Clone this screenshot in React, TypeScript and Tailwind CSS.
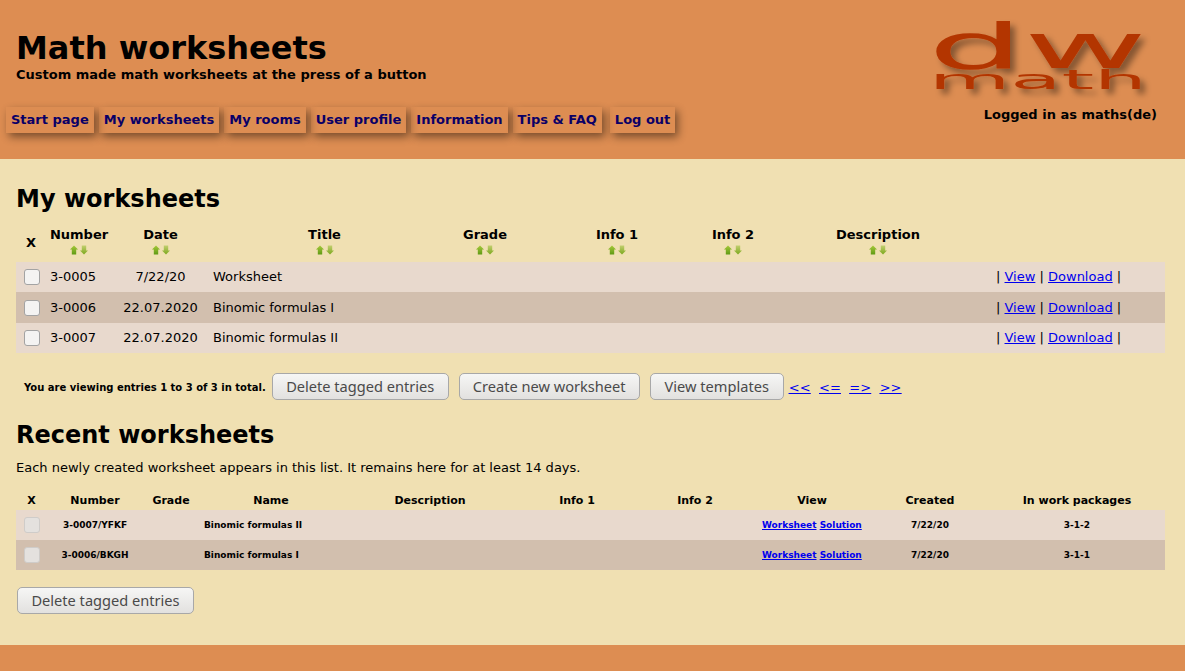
import React from "react";

const navItems = ["Start page", "My worksheets", "My rooms", "User profile", "Information", "Tips & FAQ", "Log out"];

const SortArrows = () => (
  <svg width="18" height="10" viewBox="0 0 18 10" className="mx-auto block">
    <defs>
      <linearGradient id="arrowUp" x1="0" y1="0" x2="0" y2="1">
        <stop offset="0" stopColor="#a6c93a" />
        <stop offset="1" stopColor="#5f9a14" />
      </linearGradient>
      <linearGradient id="arrowDown" x1="0" y1="0" x2="0" y2="1">
        <stop offset="0" stopColor="#c3cf70" />
        <stop offset="1" stopColor="#7aa81c" />
      </linearGradient>
    </defs>
    <path d="M4 0.5 L8 4.5 H6.2 V9.5 H1.8 V4.5 H0 Z" fill="url(#arrowUp)" />
    <path d="M11.8 0.5 H16.2 V5.5 H18 L14 9.5 L10 5.5 H11.8 Z" fill="url(#arrowDown)" />
  </svg>
);

const Logo = () => (
  <svg width="240" height="100" viewBox="0 0 240 100" className="block">
    <defs>
      <filter id="logoShadow" x="-10%" y="-10%" width="125%" height="130%">
        <feDropShadow dx="5" dy="5" stdDeviation="3" floodColor="#000" floodOpacity="0.4" />
      </filter>
    </defs>
    <g filter="url(#logoShadow)" fill="#b33600" fontFamily="'DejaVu Sans', sans-serif">
      <text x="11" y="68" fontSize="62" textLength="219" lengthAdjust="spacingAndGlyphs">dw</text>
      <text x="12" y="89" fontSize="27" textLength="218" lengthAdjust="spacingAndGlyphs">math</text>
    </g>
  </svg>
);

const Checkbox = ({ disabled }: { disabled?: boolean }) => (
  <span
    className={`block w-4 h-4 mx-auto rounded-[3px] border ${
      disabled ? "bg-[#e4e1de] border-[#cfccc9]" : "bg-[#f4f3f2] border-[#a3a3a3]"
    }`}
  />
);

const Button = ({ children, width }: { children: React.ReactNode; width: string }) => (
  <button
    className={`${width} h-[27px] rounded-[5px] border border-[#a8a8a8] bg-gradient-to-b from-[#f6f6f5] to-[#e2e1df] font-['Noto_Sans',sans-serif] text-[14.6px] text-[#4a4a4a] whitespace-nowrap`}
  >
    {children}
  </button>
);

const worksheets = [
  { no: "3-0005", date: "7/22/20", title: "Worksheet" },
  { no: "3-0006", date: "22.07.2020", title: "Binomic formulas I" },
  { no: "3-0007", date: "22.07.2020", title: "Binomic formulas II" },
];

const recent = [
  { no: "3-0007/YFKF", name: "Binomic formulas II", created: "7/22/20", pkg: "3-1-2" },
  { no: "3-0006/BKGH", name: "Binomic formulas I", created: "7/22/20", pkg: "3-1-1" },
];

const headCols = ["Number", "Date", "Title", "Grade", "Info 1", "Info 2", "Description"];

export default function App() {
  return (
    <div className="min-h-[671px] flex flex-col bg-[#f0e0b2] text-black font-['DejaVu_Sans',sans-serif]">
      <header className="h-[159px] bg-[#dd8d52] flex justify-between shrink-0">
        <div>
          <h1 className="pl-4 pt-[29px] text-[32px] leading-[38px] font-bold">Math worksheets</h1>
          <p className="pl-4 text-[13px] leading-[16px] font-bold">Custom made math worksheets at the press of a button</p>
          <nav className="flex gap-[5px] pl-[6px] mt-[24px]">
            {navItems.map((item) => (
              <a
                key={item}
                className={`h-[26px] px-[5px] flex items-center text-[13px] font-bold text-[#0a0066] whitespace-nowrap shadow-[3px_4px_9px_rgba(0,0,0,0.45)] ${
                  item === "Log out" ? "ml-[3px]" : ""
                }`}
              >
                {item}
              </a>
            ))}
          </nav>
        </div>
        <div className="w-[240px] mr-[28px] shrink-0">
          <Logo />
          <p className="mt-[7px] text-[13px] leading-[16px] font-bold text-right">Logged in as maths(de)</p>
        </div>
      </header>

      <main className="flex-1 pl-4 pr-5">
        <h2 className="mt-[25px] text-[24px] leading-[30px] font-bold">My worksheets</h2>
        <table className="mt-[10px] w-full table-fixed border-collapse text-[13px]">
          <colgroup>
            <col className="w-[30px]" />
            <col className="w-[66px]" />
            <col className="w-[97px]" />
            <col className="w-[231px]" />
            <col className="w-[90px]" />
            <col className="w-[174px]" />
            <col className="w-[58px]" />
            <col className="w-[232px]" />
            <col />
          </colgroup>
          <thead>
            <tr className="h-[38px]">
              <th className="font-bold">X</th>
              {headCols.map((col) => (
                <th key={col} className="font-bold align-top pt-[3px]">
                  <span className="block leading-[16px]">{col}</span>
                  <span className="block mt-[2px]">
                    <SortArrows />
                  </span>
                </th>
              ))}
              <th />
            </tr>
          </thead>
          <tbody>
            {worksheets.map((row, i) => (
              <tr key={row.no} className={`${i === 1 ? "bg-[#d2bfae] h-[31px]" : "bg-[#e8d9cd] h-[30px]"}`}>
                <td className="pl-[1px]"><Checkbox /></td>
                <td className="pl-1">{row.no}</td>
                <td className="text-center">{row.date}</td>
                <td className="pl-1">{row.title}</td>
                <td colSpan={4} />
                <td className="pl-[2px] whitespace-nowrap">
                  | <a className="text-[#0000ee] underline">View</a> | <a className="text-[#0000ee] underline">Download</a> |
                </td>
              </tr>
            ))}
          </tbody>
        </table>

        <div className="flex items-center mt-[20px] ml-2">
          <span className="pt-[2px] text-[10px] font-bold mr-[6px] whitespace-nowrap">You are viewing entries 1 to 3 of 3 in total.</span>
          <div className="flex gap-[10px]">
            <Button width="w-[177px]">Delete tagged entries</Button>
            <Button width="w-[181px]">Create new worksheet</Button>
            <Button width="w-[134px]">View templates</Button>
          </div>
          <div className="flex gap-[8.5px] ml-[5px] pt-[2px] text-[13px] text-[#0000ee] underline">
            <a>&lt;&lt;</a>
            <a>&lt;=</a>
            <a>=&gt;</a>
            <a>&gt;&gt;</a>
          </div>
        </div>

        <h2 className="mt-[20px] text-[24px] leading-[30px] font-bold">Recent worksheets</h2>
        <p className="mt-[10px] text-[13px] leading-[16px]">
          Each newly created worksheet appears in this list. It remains here for at least 14 days.
        </p>

        <table className="mt-[16px] w-full table-fixed border-collapse">
          <colgroup>
            <col className="w-[31px]" />
            <col className="w-[96px]" />
            <col className="w-[56px]" />
            <col className="w-[144px]" />
            <col className="w-[174px]" />
            <col className="w-[120px]" />
            <col className="w-[116px]" />
            <col className="w-[118px]" />
            <col className="w-[118px]" />
            <col />
          </colgroup>
          <thead>
            <tr className="h-[18px] text-[11px]">
              {["X", "Number", "Grade", "Name", "Description", "Info 1", "Info 2", "View", "Created", "In work packages"].map((col) => (
                <th key={col} className="font-bold">{col}</th>
              ))}
            </tr>
          </thead>
          <tbody className="text-[9px] font-bold">
            {recent.map((row, i) => (
              <tr key={row.no} className={`h-[30px] ${i === 1 ? "bg-[#d2bfae]" : "bg-[#e8d9cd]"}`}>
                <td><Checkbox disabled /></td>
                <td className="text-center pt-[2px]">{row.no}</td>
                <td />
                <td className="pl-[5px] pt-[2px]">{row.name}</td>
                <td />
                <td />
                <td />
                <td className="pl-[9px] pt-[2px] whitespace-nowrap">
                  <a className="text-[#0000ee] underline">Worksheet</a> <a className="text-[#0000ee] underline">Solution</a>
                </td>
                <td className="text-center pt-[2px]">{row.created}</td>
                <td className="text-center pt-[2px]">{row.pkg}</td>
              </tr>
            ))}
          </tbody>
        </table>

        <div className="mt-[17px] ml-[1px]">
          <Button width="w-[177px]">Delete tagged entries</Button>
        </div>
      </main>

      <footer className="h-[26px] bg-[#dd8d52] shrink-0" />
    </div>
  );
}
